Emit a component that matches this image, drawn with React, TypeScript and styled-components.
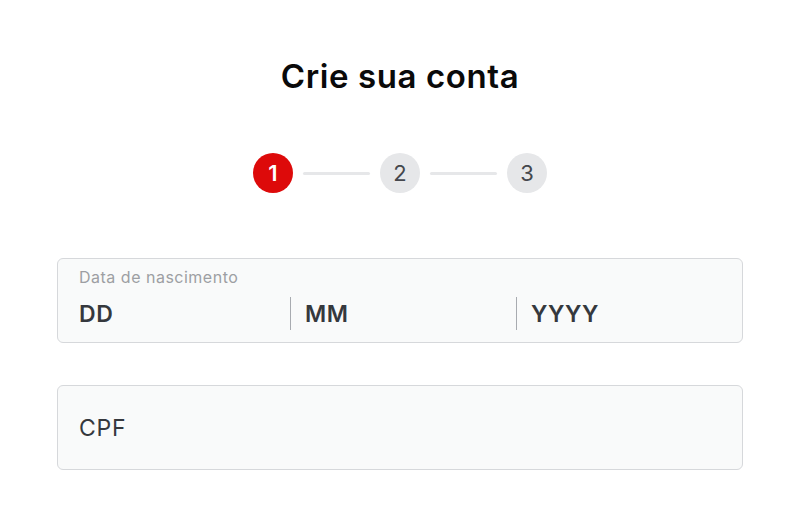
import React from "react";
import styled, { createGlobalStyle } from "styled-components";

const Global = createGlobalStyle`
  html, body { margin: 0; padding: 0; background: #ffffff; }
  body { font-family: Inter, "Noto Sans", sans-serif; -webkit-font-smoothing: antialiased; }
  * { box-sizing: border-box; }
`;

const Page = styled.main`
  width: 800px;
  height: 512px;
  padding: 56px 57px 0 57px;
  display: flex;
  flex-direction: column;
  align-items: stretch;
`;

const Title = styled.h1`
  margin: 0;
  font-size: 33px;
  line-height: 40px;
  font-weight: 600;
  color: #0a0a0a;
  text-align: center;
  letter-spacing: 0.6px;
`;

const Stepper = styled.div`
  margin-top: 57px;
  display: flex;
  align-items: center;
  justify-content: center;
  gap: 10px;
`;

const StepCircle = styled.div<{ $active?: boolean }>`
  width: 40px;
  height: 40px;
  border-radius: 50%;
  display: flex;
  align-items: center;
  justify-content: center;
  font-size: 22px;
  font-weight: ${(p) => (p.$active ? 600 : 400)};
  background: ${(p) => (p.$active ? "#dd0a0a" : "#e6e7e9")};
  color: ${(p) => (p.$active ? "#ffffff" : "#45484d")};
`;

const StepLine = styled.div`
  width: 67px;
  height: 3px;
  border-radius: 2px;
  background: #e6e7e9;
`;

const Field = styled.div`
  height: 85px;
  border: 1px solid #d6d8db;
  border-radius: 6px;
  background: #f9fafa;
  padding: 0 21px;
`;

const DateField = styled(Field)`
  margin-top: 65px;
  display: flex;
  flex-direction: column;
  padding-top: 7px;
`;

const Label = styled.div`
  font-size: 16px;
  line-height: 22px;
  color: #9d9fa3;
  letter-spacing: 0.5px;
`;

const Segments = styled.div`
  margin-top: 9px;
  display: grid;
  grid-template-columns: 211px 226px 1fr;
  height: 33px;
`;

const Segment = styled.div<{ $divider?: boolean }>`
  display: flex;
  align-items: center;
  padding-left: ${(p) => (p.$divider ? "14px" : "0")};
  border-left: ${(p) => (p.$divider ? "1px solid #a8abb0" : "none")};
  font-size: 23px;
  font-weight: 600;
  color: #35383d;
  letter-spacing: 0.6px;
`;

const CpfField = styled(Field)`
  margin-top: 42px;
  display: flex;
  align-items: center;
  font-size: 23px;
  color: #35383d;
  letter-spacing: 0.8px;
`;

export default function App() {
  return (
    <>
      <Global />
      <Page>
        <Title>Crie sua conta</Title>
        <Stepper>
          <StepCircle $active>1</StepCircle>
          <StepLine />
          <StepCircle>2</StepCircle>
          <StepLine />
          <StepCircle>3</StepCircle>
        </Stepper>
        <DateField>
          <Label>Data de nascimento</Label>
          <Segments>
            <Segment>DD</Segment>
            <Segment $divider>MM</Segment>
            <Segment $divider>YYYY</Segment>
          </Segments>
        </DateField>
        <CpfField>CPF</CpfField>
      </Page>
    </>
  );
}
